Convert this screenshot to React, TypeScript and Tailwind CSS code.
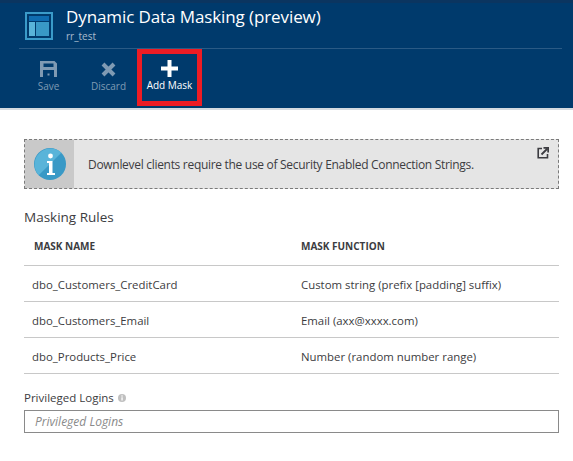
const font = "font-['Open_Sans',sans-serif]"

const rules = [
  { name: 'dbo_Customers_CreditCard', fn: 'Custom string (prefix [padding] suffix)' },
  { name: 'dbo_Customers_Email', fn: 'Email (axx@xxxx.com)' },
  { name: 'dbo_Products_Price', fn: 'Number (random number range)' },
]

function BladeIcon() {
  return (
    <svg width="28" height="28" viewBox="0 0 28 28" className="shrink-0">
      <rect x="1" y="1" width="26" height="26" fill="none" stroke="#3a9bc9" strokeWidth="2" />
      <rect x="4" y="4" width="20" height="5" fill="#0f6cb0" />
      <rect x="4" y="10" width="6" height="14" fill="#59b4d9" />
      <rect x="11" y="10" width="13" height="14" fill="#3999c6" />
    </svg>
  )
}

function InfoIcon() {
  return (
    <svg width="32" height="32" viewBox="0 0 32 32">
      <circle cx="16" cy="16" r="16" fill="#3999c6" />
      <path d="M4.7 27.3A16 16 0 0 1 27.3 4.7Z" fill="#59b4d9" />
      <circle cx="16.5" cy="8" r="2.4" fill="#fff" />
      <path d="M13 13h5.5v12H21v2h-8v-2h2v-10h-2Z" fill="#fff" />
    </svg>
  )
}

function Command({ label, active, children }: { label: string; active?: boolean; children: React.ReactNode }) {
  return (
    <div className={`flex flex-col items-center ${active ? 'text-white' : 'text-[#7f9ab3]'}`}>
      <div className="flex h-[20px] items-center justify-center">{children}</div>
      <span className="text-[10px] leading-[14px]">{label}</span>
    </div>
  )
}

export default function App() {
  return (
    <div className={`h-[461px] w-[573px] overflow-hidden bg-white text-[#3c3c41] ${font}`}>
      <div className="h-[110px] border-b-2 border-[#d5dbe1] border-t-[3px] border-t-[#0b3560] bg-[#003a6c] pl-[19px]">
        <div className="mr-[11px] flex h-[46px] items-center gap-[13px] border-b border-[#2a5a85] pl-[6px]">
          <BladeIcon />
          <div className="-mt-[3px] flex flex-col text-white">
            <span className="text-[17px] leading-[22px] tracking-[-0.1px]">Dynamic Data Masking (preview)</span>
            <span className="mt-[1px] text-[10px] leading-[14px] text-[#a9bccd]">rr_test</span>
          </div>
        </div>
        <div className="flex">
          <div className="flex w-[118px] pt-[10px]">
            <div className="flex w-[60px] justify-center">
              <Command label="Save">
                <svg width="17" height="16" viewBox="0 0 17 16">
                  <path fillRule="evenodd" d="M0 0h14.5L17 2.5V16H0ZM3.5 2.5V6h10V2.5ZM3 9v7h11V9ZM7.5 12.5h2v2h-2Z" fill="#7f9ab3" />
                </svg>
              </Command>
            </div>
            <div className="ml-[2px] flex w-[58px] justify-center">
              <Command label="Discard">
                <svg width="15" height="15" viewBox="0 0 15 15">
                  <path d="M2 2l11 11M13 2L2 13" stroke="#7f9ab3" strokeWidth="4" />
                </svg>
              </Command>
            </div>
          </div>
          <div className="flex h-[57px] w-[65px] flex-col items-center border-[5px] border-[#ed1c24] pt-[4px]">
            <Command label="Add Mask" active>
              <svg width="17" height="17" viewBox="0 0 17 17">
                <path d="M8.5 0v17M0 8.5h17" stroke="#fff" strokeWidth="4" />
              </svg>
            </Command>
          </div>
        </div>
      </div>

      <div className="px-[14px] pl-[24px] pt-[29px]">
        <div className="relative flex h-[50px] items-center border border-dashed border-[#7a7a7a] bg-[#e5e5e5]">
          <div className="flex h-full w-[49px] items-center justify-center bg-[#c9c9c9]">
            <InfoIcon />
          </div>
          <span className="pl-[14px] pt-[2px] text-[12px] tracking-[-0.3px] text-[#3c3c41]">
            Downlevel clients require the use of Security Enabled Connection Strings.
          </span>
          <svg width="12" height="12" viewBox="0 0 12 12" className="absolute right-[9px] top-[7px]">
            <path d="M5 1.5H1.2v9.3h9.3V7" fill="none" stroke="#3c3c41" strokeWidth="1.6" />
            <path d="M4.5 7.5 10 2M6.5 .8h4.7v4.7" fill="none" stroke="#3c3c41" strokeWidth="1.8" />
          </svg>
        </div>

        <h2 className="mt-[18px] text-[13.5px] leading-[20px]">Masking Rules</h2>

        <div className="mt-[11px]">
          <div className="flex h-[28px] items-start border-b border-[#c8c8c8] text-[10px] font-bold uppercase leading-[16px]">
            <span className="w-[277px] pl-[10px]">Mask Name</span>
            <span>Mask Function</span>
          </div>
          {rules.map(r => (
            <div key={r.name} className="flex h-[36px] items-center border-b border-[#c8c8c8] pt-[2px] text-[11.4px]">
              <span className="w-[277px] pl-[8px]">{r.name}</span>
              <span>{r.fn}</span>
            </div>
          ))}
        </div>

        <div className="mt-[16px] flex items-center gap-[4px] text-[11.5px] leading-[16px]">
          Privileged Logins
          <svg width="8" height="8" viewBox="0 0 8 8">
            <circle cx="4" cy="4" r="4" fill="#c0c0c0" />
            <rect x="3.4" y="3.3" width="1.3" height="3.2" fill="#fff" />
            <rect x="3.4" y="1.4" width="1.3" height="1.2" fill="#fff" />
          </svg>
        </div>
        <div className="mt-[4px] flex h-[23px] items-center border border-[#8a8a8a] pl-[10px] text-[12px] italic text-[#8a8a8a]">
          Privileged Logins
        </div>
      </div>
    </div>
  )
}
